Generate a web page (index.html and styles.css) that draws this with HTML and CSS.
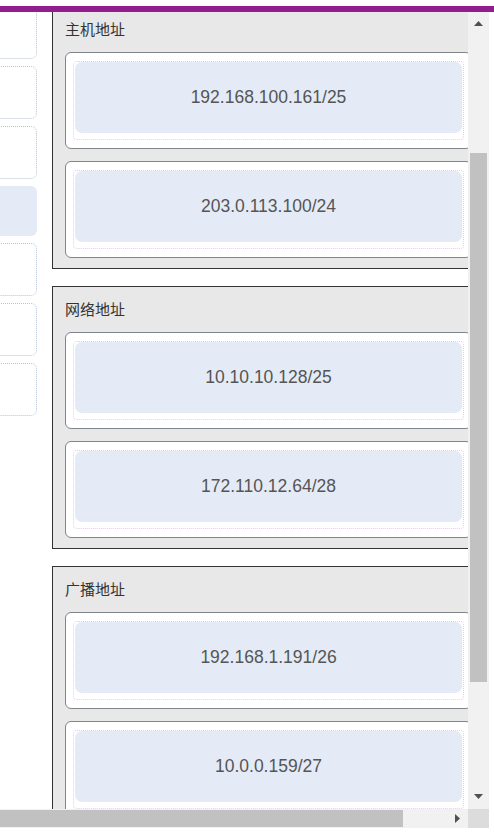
FILE: index.html
```html
<!DOCTYPE html>
<html lang="zh">
<head>
<meta charset="utf-8">
<title>地址分类</title>
<link rel="stylesheet" href="styles.css">
</head>
<body>
<div class="page">
  <div class="topbar"></div>
  <div class="frame">
    <div class="viewport">
      <div class="content">
        <div class="side">
          <div class="side-card"></div>
          <div class="side-card"></div>
          <div class="side-card"></div>
          <div class="side-card active"></div>
          <div class="side-card"></div>
          <div class="side-card"></div>
          <div class="side-card"></div>
        </div>
        <div class="groups">
          <section class="group">
            <div class="group-title">主机地址</div>
            <div class="cards">
              <div class="addr-card"><div class="drop"><div class="addr">192.168.100.161/25</div></div></div>
              <div class="addr-card"><div class="drop"><div class="addr">203.0.113.100/24</div></div></div>
            </div>
          </section>
          <section class="group">
            <div class="group-title">网络地址</div>
            <div class="cards">
              <div class="addr-card"><div class="drop"><div class="addr">10.10.10.128/25</div></div></div>
              <div class="addr-card"><div class="drop"><div class="addr">172.110.12.64/28</div></div></div>
            </div>
          </section>
          <section class="group">
            <div class="group-title">广播地址</div>
            <div class="cards">
              <div class="addr-card"><div class="drop"><div class="addr">192.168.1.191/26</div></div></div>
              <div class="addr-card"><div class="drop"><div class="addr">10.0.0.159/27</div></div></div>
            </div>
          </section>
        </div>
      </div>
    </div>
    <div class="vbar">
      <div class="vbtn up"><svg width="9" height="5" viewBox="0 0 9 5"><polygon points="0,5 4.5,0 9,5" fill="#505050"/></svg></div>
      <div class="vtrack"><div class="vthumb"></div></div>
      <div class="vbtn down"><svg width="9" height="5" viewBox="0 0 9 5"><polygon points="0,0 9,0 4.5,5" fill="#505050"/></svg></div>
    </div>
    <div class="hbar">
      <div class="hthumb"></div>
      <div class="htrack"></div>
      <div class="hbtn"><svg width="5" height="9" viewBox="0 0 5 9"><polygon points="0,0 5,4.5 0,9" fill="#505050"/></svg></div>
    </div>
    <div class="corner"></div>
  </div>
</div>
</body>
</html>
```

FILE: styles.css
```css
html, body {
  margin: 0;
  padding: 0;
  background: #fff;
}
body {
  width: 494px;
  height: 832px;
  overflow: hidden;
}
.page {
  padding-top: 6px;
}
.topbar {
  height: 6px;
  background: #911e8c;
}
.frame {
  display: grid;
  grid-template-columns: 468px 21px;
  grid-template-rows: 797px 19px;
  width: 489px;
}
.viewport {
  overflow: hidden;
  background: #fff;
}
.content {
  display: flex;
  align-items: flex-start;
  gap: 15px;
  margin-top: -6px;
  margin-left: -163px;
}
.side {
  flex: none;
  width: 200px;
  display: flex;
  flex-direction: column;
  gap: 7px;
}
.side-card {
  box-sizing: border-box;
  height: 53px;
  border: 1px dotted #b5c3d8;
  border-radius: 6px;
  background: #fff;
}
.side-card.active {
  height: 50px;
  border: none;
  background: #e4ebf6;
}
.groups {
  flex: none;
  width: 433px;
  display: flex;
  flex-direction: column;
  gap: 17px;
}
.group {
  box-sizing: border-box;
  border: 1px solid #333;
  background: #e8e8e8;
  padding: 12px 12px 10px;
}
.group-title {
  font-family: "Noto Sans CJK SC", "Noto Sans", sans-serif;
  font-size: 15px;
  line-height: 20px;
  color: #333;
  margin-bottom: 13px;
}
.cards {
  display: flex;
  flex-direction: column;
  gap: 12px;
}
.addr-card {
  border: 1px solid #80858b;
  border-radius: 6px;
  background: #fff;
  padding: 8px 7px;
}
.drop {
  border: 1px dotted #f0c4f0;
  border-radius: 4px;
  padding: 0 1px 6px;
}
.addr {
  height: 71px;
  border-radius: 7px;
  background: #e4ebf6;
  display: flex;
  align-items: center;
  justify-content: center;
  font-family: "Liberation Sans", Arial, sans-serif;
  font-size: 17.5px;
  color: #555;
}
.vbar {
  background: #f1f1f1;
  display: flex;
  flex-direction: column;
}
.vbtn {
  display: flex;
  align-items: center;
  justify-content: center;
}
.vbtn.up {
  height: 23px;
}
.vbtn.down {
  height: 26px;
}
.vtrack {
  flex: 1;
}
.vthumb {
  margin: 118px 2px 0;
  height: 529px;
  background: #c1c1c1;
}
.hbar {
  background: #f1f1f1;
  display: flex;
  align-items: center;
}
.hthumb {
  width: 403px;
  height: 17px;
  background: #c1c1c1;
}
.htrack {
  flex: 1;
}
.hbtn {
  width: 21px;
  height: 19px;
  display: flex;
  align-items: center;
  justify-content: center;
}
.corner {
  background: #dcdcdc;
}
```
